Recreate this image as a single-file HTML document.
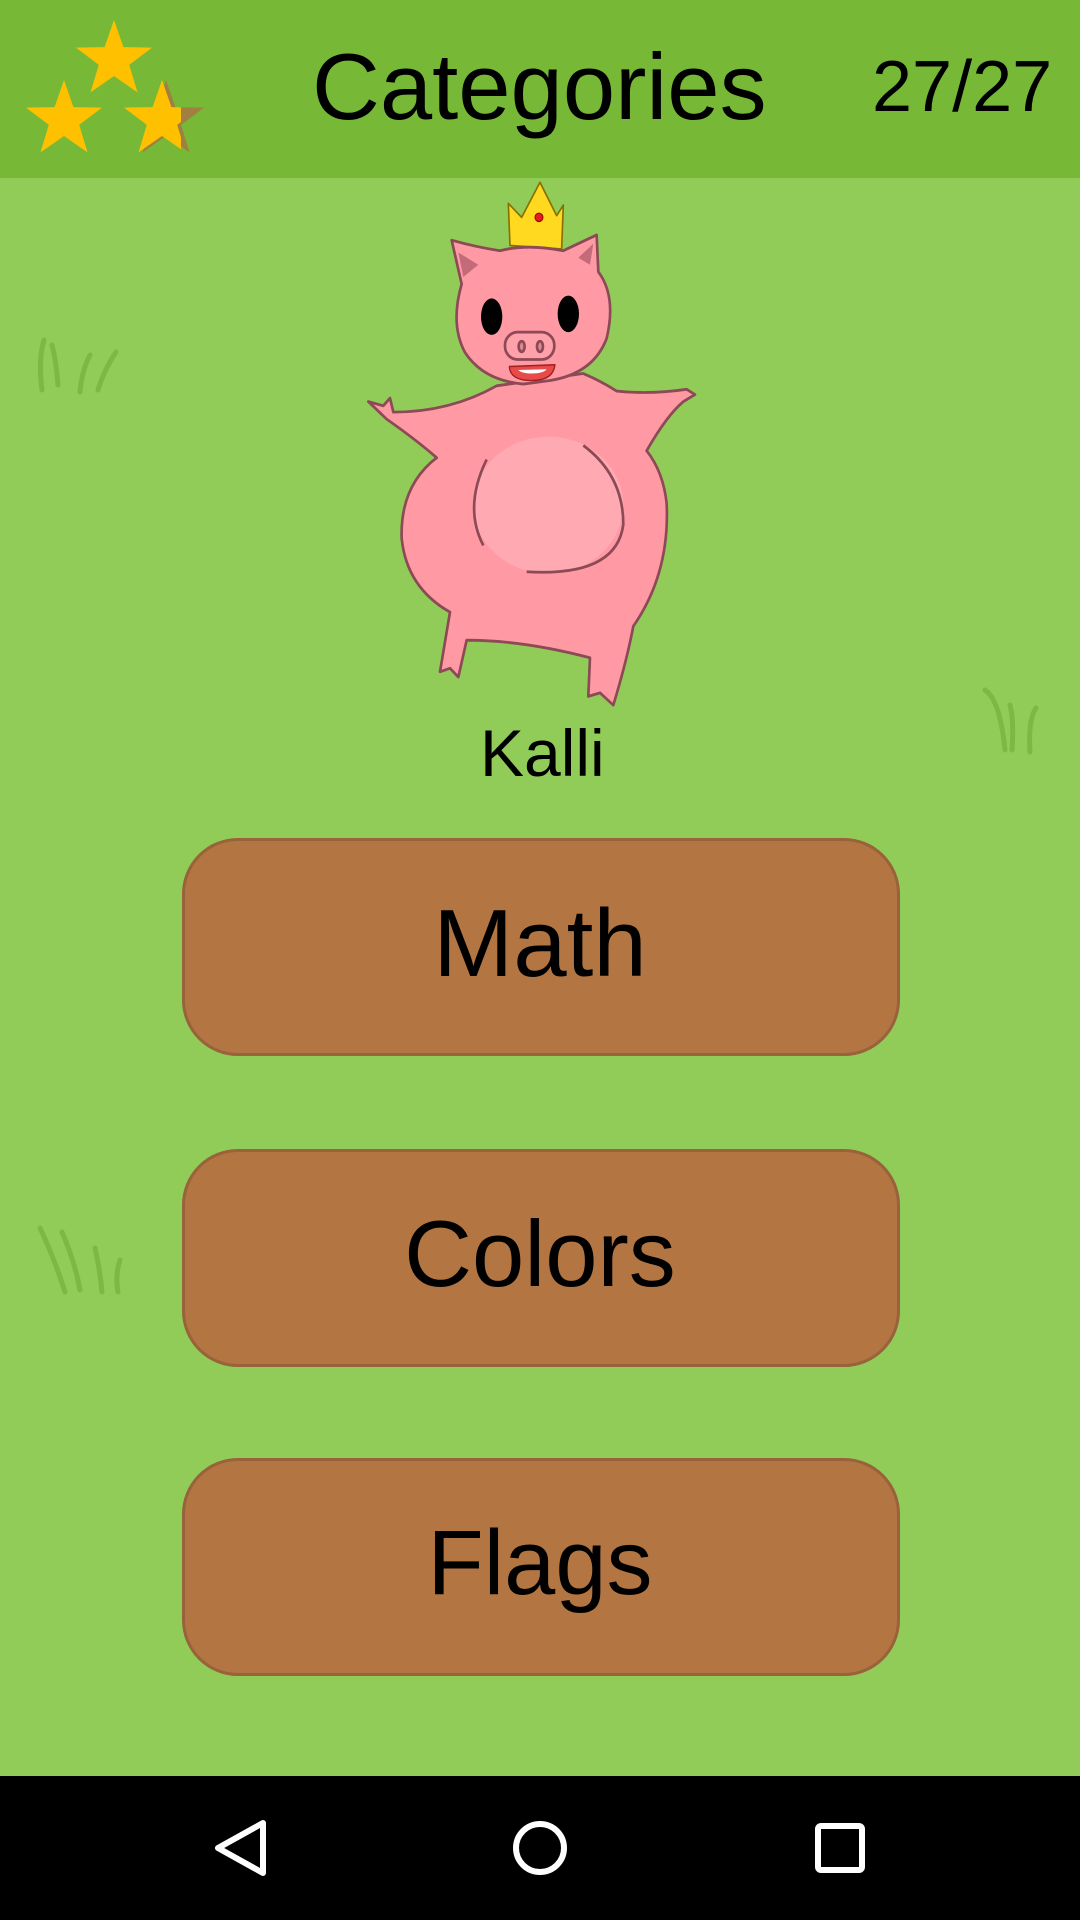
<!DOCTYPE html>
<html><head><meta charset="utf-8"><style>
html,body{margin:0;padding:0;}
body{width:1080px;height:1920px;position:relative;overflow:hidden;background:#92cc58;font-family:"Liberation Sans",sans-serif;}
.hdr{position:absolute;left:0;top:0;width:1080px;height:178px;background:#77b936;}
.t{position:absolute;white-space:nowrap;color:#000;line-height:1;}
.btn{position:absolute;left:182px;width:712px;height:212px;background:#b37642;border:3px solid #98623a;border-radius:56px;}
.nav{position:absolute;left:0;top:1776px;width:1080px;height:144px;background:#000;}
</style></head><body>
<div class="hdr"></div>
<svg style="position:absolute;left:0;top:0" width="220" height="178">
<defs><polygon id="st" points="0,-40 9.4,-12.9 38,-12.4 15.2,4.9 23.5,32.4 0,16 -23.5,32.4 -15.2,4.9 -38,-12.4 -9.4,-12.9"/>
<clipPath id="cl"><rect x="0" y="0" width="181" height="178"/></clipPath></defs>
<use href="#st" x="114" y="60" fill="#ffc000"/>
<use href="#st" x="64" y="120" fill="#ffc000"/>
<use href="#st" x="166" y="120" fill="#a08040"/>
<g clip-path="url(#cl)"><use href="#st" x="162" y="120" fill="#ffc000"/></g>
</svg>
<div class="t" style="left:312px;top:40px;font-size:94px;">Categories</div>
<div class="t" style="left:872px;top:51px;font-size:72px;">27/27</div>

<svg style="position:absolute;left:0;top:0" width="1080" height="1776">
<g stroke="#7db843" stroke-width="5" fill="none" stroke-linecap="round">
<path d="M42 390 Q38 360 44 340 M58 385 Q56 360 52 345 M80 392 Q82 370 90 355 M98 390 Q104 370 116 352"/>
<path d="M985 690 Q1000 700 1005 750 M1012 750 Q1014 720 1010 705 M1030 752 Q1028 720 1036 708"/>
<path d="M40 1228 Q55 1260 65 1292 M62 1232 Q75 1262 80 1290 M95 1248 Q100 1270 102 1292 M120 1260 Q115 1275 118 1292"/>
</g>
<g transform="translate(350,170) scale(0.3333,0.3509)" stroke="#8b4a55" stroke-width="8" stroke-linejoin="round">
<path d="M440 615 Q300 690 130 690 L120 650 L100 672 L55 660 L110 710 Q200 770 260 820 Q150 900 155 1050 Q170 1190 300 1260 L270 1430 L300 1420 L325 1445 L350 1340 Q520 1340 720 1390 L715 1500 L750 1490 L790 1525 Q830 1400 850 1300 Q960 1150 950 950 Q940 860 890 800 Q950 700 1000 660 L1035 640 L1010 625 Q900 640 800 630 Q750 600 700 580 Z" fill="#ff9aa5"/>
<ellipse cx="595" cy="955" rx="225" ry="195" fill="#ffaab2" stroke="none"/>
<path d="M410 825 Q340 960 400 1070 M700 785 Q820 870 820 1010 Q800 1160 530 1145" fill="none"/>
<path d="M480 215 L475 95 L515 135 L570 35 L620 130 L640 100 L635 225 Z" fill="#ffd820" stroke="#8a7000" stroke-width="5"/>
<circle cx="567" cy="135" r="12" fill="#e02020" stroke="#900" stroke-width="3"/>
<path d="M450 230 Q530 210 640 230 L740 185 L745 290 Q800 360 770 480 Q730 580 600 600 L520 610 Q400 600 345 520 Q300 440 335 325 L305 200 Q380 220 450 230 Z" fill="#ff9aa5"/>
<path d="M325 235 L340 305 L385 270 Z M730 210 L720 270 L685 250 Z" fill="#c46b7a" stroke="none"/>
<ellipse cx="425" cy="418" rx="32" ry="52" fill="#000" stroke="none"/>
<ellipse cx="655" cy="410" rx="32" ry="52" fill="#000" stroke="none"/>
<rect x="465" y="462" width="148" height="78" rx="38" fill="#ffa0aa"/>
<ellipse cx="515" cy="503" rx="9" ry="15" fill="#e08890"/>
<ellipse cx="570" cy="503" rx="9" ry="15" fill="#e08890"/>
<path d="M478 560 L615 555 Q610 600 545 600 Q480 600 478 560 Z" fill="#e84a4a" stroke="#a02020" stroke-width="4"/>
<path d="M505 570 L590 568 Q580 580 545 580 Q515 580 505 570 Z" fill="#fff" stroke="none"/>
</g>
</svg>
<div class="t" style="left:480px;top:720px;font-size:66px;">Kalli</div>

<div class="btn" style="top:838px;"></div>
<div class="btn" style="top:1149px;"></div>
<div class="btn" style="top:1458px;"></div>
<div class="t" style="left:0;width:1080px;text-align:center;top:896px;font-size:96px;">Math</div>
<div class="t" style="left:0;width:1080px;text-align:center;top:1207px;font-size:94px;">Colors</div>
<div class="t" style="left:0;width:1080px;text-align:center;top:1517px;font-size:92px;">Flags</div>

<div class="nav"></div>
<svg style="position:absolute;left:0;top:1776px" width="1080" height="144">
<g fill="none" stroke="#fff" stroke-width="6" stroke-linejoin="round">
<path d="M263 47 L263 97 L218 72 Z"/>
<circle cx="540" cy="72" r="24"/>
<rect x="818" y="50" width="44" height="44" rx="3"/>
</g>
</svg>
</body></html>
